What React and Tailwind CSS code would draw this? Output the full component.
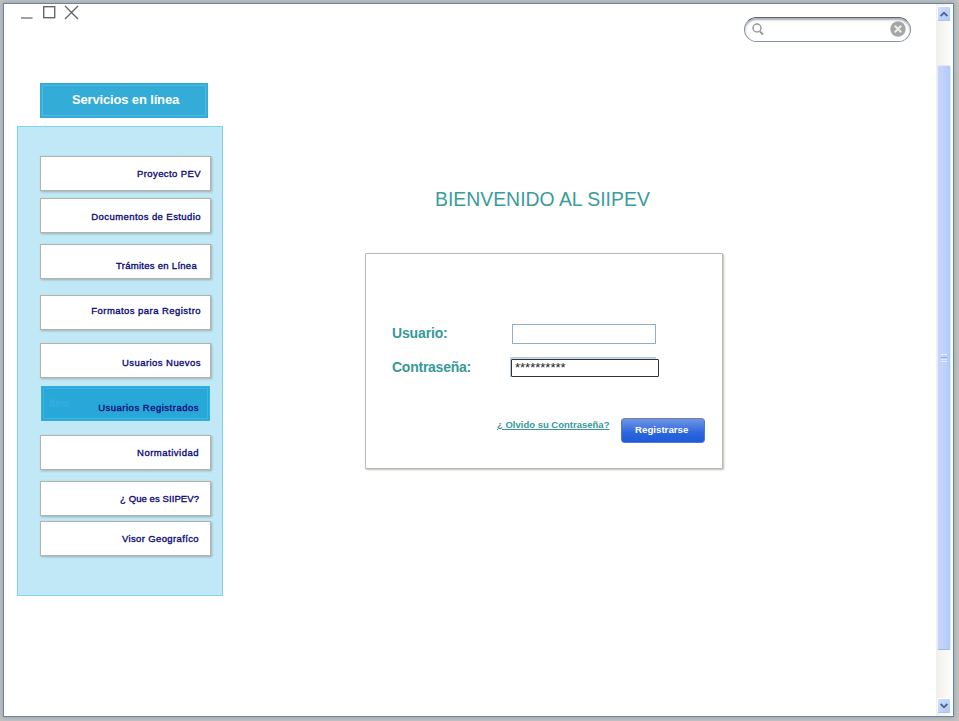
const menu = [
  { label: 'Proyecto PEV', box: 'mt-[29px] pt-[10px] pr-[9px]', text: 'tracking-[0.4px]' },
  { label: 'Documentos de Estudio', box: 'mt-[7px] pt-[11px] pr-[9px]', text: 'tracking-[0.42px]' },
  { label: 'Trámites en Línea', box: 'mt-[11px] pt-[14px] pr-[13px]', text: 'tracking-[0.28px]' },
  { label: 'Formatos para Registro', box: 'mt-[16px] pt-[8px] pr-[9px]', text: 'tracking-[0.45px]' },
  { label: 'Usuarios Nuevos', box: 'mt-[13px] pt-[12px] pr-[9px]', text: 'tracking-[0.45px]' },
  { label: 'Usuarios Registrados', box: 'mt-[8px] pt-[14px] pr-[10px]', text: 'tracking-[0.5px]', active: true },
  { label: 'Normatividad', box: 'mt-[14px] pt-[10px] pr-[11px]', text: 'tracking-[0.5px]' },
  { label: '¿ Que es SIIPEV?', box: 'mt-[11px] pt-[10px] pr-[11px]', text: 'tracking-[0.08px]' },
  { label: 'Visor Geografíco', box: 'mt-[5px] pt-[10px] pr-[11px]', text: 'tracking-[0.37px]' },
];

function MenuItem({ label, box, text, active }) {
  const look = active
    ? 'ml-px w-[169px] justify-between border-[#35b0da] bg-[#27a8d8] outline-1 -outline-offset-3 outline-[#3fb5de]'
    : 'w-[171px] justify-end border-[#b3b3a8] bg-white shadow-[1px_1px_2px_rgba(90,110,115,0.45)]';
  return (
    <a className={`flex h-[35px] shrink-0 items-start border ${look} ${box}`}>
      {active && <span className="-mt-[4px] pl-[7px] text-[10px] leading-[14px] font-bold text-[#36afdc]">Item</span>}
      <span className={`text-[9.5px] leading-[14px] whitespace-nowrap text-[#0c0c78] [-webkit-text-stroke:0.35px_#0c0c78] ${text}`}>{label}</span>
    </a>
  );
}

function WindowControls() {
  return (
    <svg className="mt-px ml-[17px]" width="58" height="16" viewBox="0 0 58 16" fill="none" stroke="#666">
      <path d="M0 13H11.500" stroke="#8a8a8a" strokeWidth="1.6" />
      <rect x="22.700" y="1.700" width="11" height="11" strokeWidth="1.4" />
      <path d="M44 1L57 14M57 1L44 14" strokeWidth="1.4" />
    </svg>
  );
}

function SearchBox() {
  return (
    <div className="mt-[13px] mr-[25px] flex h-[25px] w-[167px] items-center justify-between rounded-full border border-[#8793a6] border-t-[#59647d] bg-white pr-[4px] pb-px pl-[7px] shadow-[inset_0_2px_2px_rgba(90,90,90,0.5)]">
      <svg width="12" height="13" viewBox="0 0 12 13" fill="none" stroke="#999">
        <circle cx="5" cy="5" r="4" strokeWidth="1.5" />
        <path d="M8 8.500L11 11.500" strokeWidth="2" />
      </svg>
      <svg width="16" height="16" viewBox="0 0 16 16">
        <circle cx="8" cy="8" r="7.700" fill="#a6a6a6" />
        <path d="M4.800 4.800L11.200 11.200M11.200 4.800L4.800 11.200" stroke="#eee" strokeWidth="2" />
      </svg>
    </div>
  );
}

function ArrowButton({ d }) {
  return (
    <div className="flex h-[15px] w-[14px] shrink-0 items-center justify-center rounded-[2px] border border-white border-b-[#a9c5f0] bg-linear-to-br from-[#d2dffd] to-[#afc9fc]">
      <svg width="8" height="6" viewBox="0 0 8 6" fill="none" stroke="#4d6185" strokeWidth="1.8">
        <path d={d} />
      </svg>
    </div>
  );
}

function ScrollBar() {
  return (
    <div className="flex w-[16px] shrink-0 flex-col items-center bg-linear-to-r from-[#f0efea] to-[#fdfdfb] pt-[2px] pb-[3px]">
      <ArrowButton d="M0.700 5L4 1.700L7.300 5" />
      <div className="mt-[44px] flex h-[585px] w-[14px] flex-col items-center justify-center rounded-[2px] border border-[#e3ebfa] border-b-[#9fb9ea] bg-linear-to-r from-[#c6d5fa] via-[#bfd1fb] to-[#aecbfe]">
        <div className="h-[8px] w-[6px] border-y border-[#eaf1fe] pt-[2px]">
          <div className="h-px bg-[#8db0f4]" />
          <div className="mt-px h-px bg-[#eaf1fe]" />
        </div>
      </div>
      <div className="flex-1" />
      <ArrowButton d="M0.700 1L4 4.300L7.300 1" />
    </div>
  );
}

function Sidebar() {
  return (
    <div className="ml-[13px] flex w-[206px] shrink-0 flex-col">
      <div className="ml-[23px] h-[35px] w-[168px] bg-[#33acd7] p-[2px]">
        <div className="flex h-full items-center justify-center border border-[#53b9de] text-[13px] font-bold text-white">
          <span className="mr-[-3px] -mt-[2px] tracking-[-0.15px] whitespace-nowrap">Servicios en línea</span>
        </div>
      </div>
      <nav className="mt-[8px] flex h-[470px] flex-col border border-[#7fd3ee] bg-[#c1e8f6] pl-[22px]">
        {menu.map((item) => (
          <MenuItem key={item.label} {...item} />
        ))}
      </nav>
    </div>
  );
}

function Login() {
  return (
    <div className="mt-[104px] ml-[142px] flex w-[358px] flex-col">
      <h1 className="ml-[70px] h-[24px] text-[19.4px] leading-[24px] whitespace-nowrap text-[#3a9c9c]">BIENVENIDO AL SIIPEV</h1>
      <form className="mt-[42px] flex h-[216px] flex-col rounded-[1px] border border-[#b9b9b0] bg-white pt-[70px] pl-[26px] shadow-[1px_1px_2px_rgba(120,120,110,0.5)]">
        <div className="flex h-[20px] items-center">
          <label className="-mt-[2px] w-[120px] text-[14px] leading-[16px] font-bold tracking-[-0.15px] text-[#379999]">Usuario:</label>
          <div className="h-[20px] w-[144px] border border-[#93aecb]" />
        </div>
        <div className="mt-[13px] flex h-[20px] items-center">
          <label className="w-[118px] text-[14px] leading-[16px] font-bold tracking-[-0.25px] text-[#379999]">Contraseña:</label>
          <div className="h-[20px] w-[146px] border border-r-0 border-[#b9cbdc] bg-[#c9d8e6] pt-px">
            <div className="h-[18px] w-[148px] rounded-[1px] border border-[#333] bg-white pl-[3px] text-[13px] leading-[16px] text-[#222]">**********</div>
          </div>
        </div>
        <div className="mt-[41px] ml-[105px] flex items-start">
          <a className="mt-px w-[124px] text-[9.5px] leading-[12px] font-bold whitespace-nowrap text-[#379999] underline">¿ Olvido su Contraseña?</a>
          <div className="flex h-[25px] w-[84px] items-center rounded-[4px] border border-[#4f78c8] border-t-[#778098] bg-linear-to-b from-[#6d95e9] via-[#2d66dc] via-60% to-[#1d5bdd] pl-[13px] text-[9.7px] font-bold text-white">Registrarse</div>
        </div>
      </form>
    </div>
  );
}

export default function App() {
  return (
    <div className="h-[721px] w-[959px] overflow-hidden bg-[#c2c2c2] pt-[3px] pl-[3px] font-['Liberation_Sans',Arial,sans-serif]">
      <div className="flex h-[714px] w-[951px] border border-[#5a8ab0] bg-white shadow-[0_0_4px_1px_rgba(120,120,120,0.4)]">
        <main className="flex min-w-0 flex-1 flex-col">
          <header className="flex h-[79px] items-start justify-between">
            <WindowControls />
            <SearchBox />
          </header>
          <div className="flex items-start">
            <Sidebar />
            <Login />
          </div>
        </main>
        <ScrollBar />
        <div className="w-px shrink-0" />
      </div>
    </div>
  );
}
